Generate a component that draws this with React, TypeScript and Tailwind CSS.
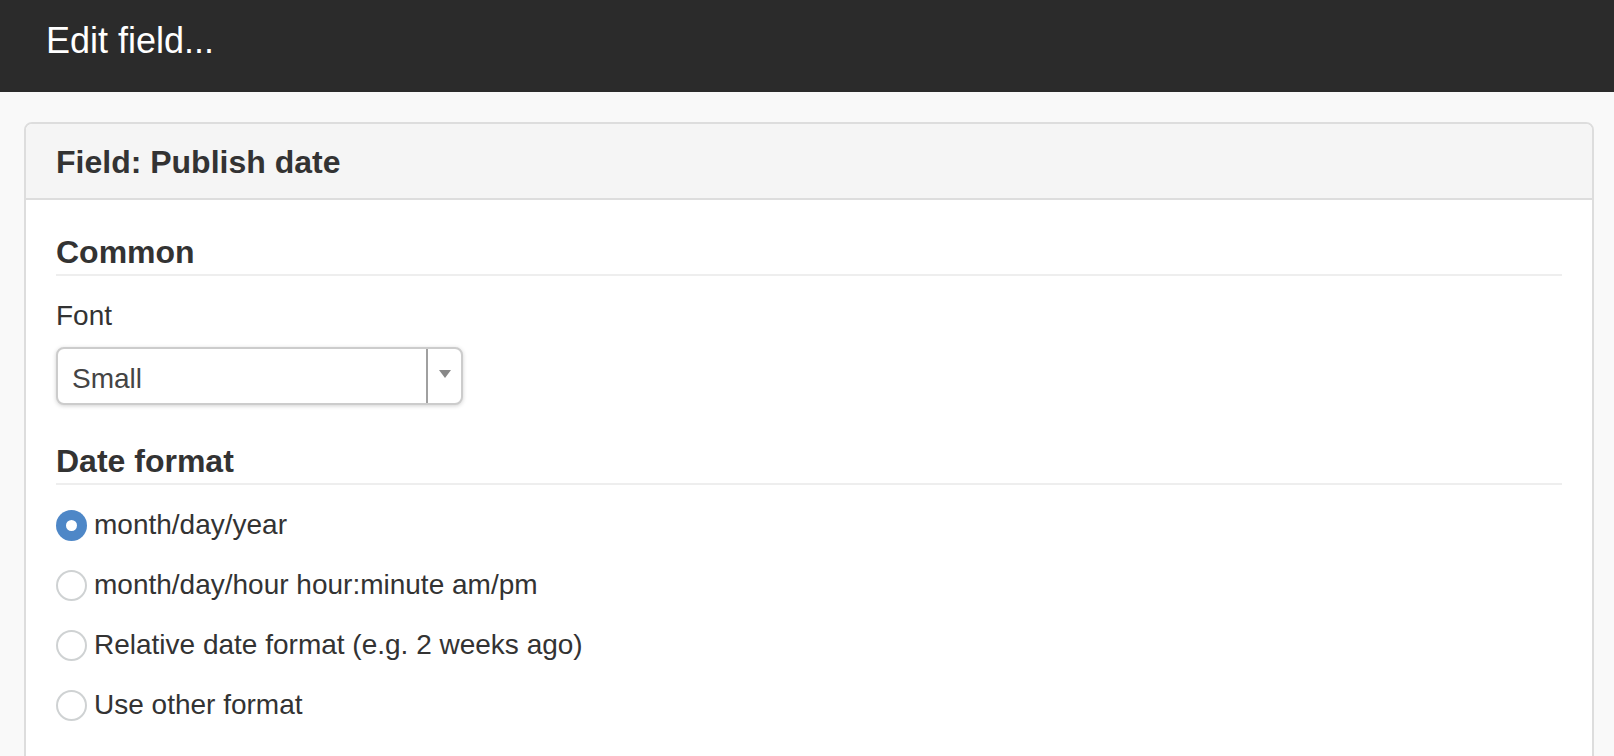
import React from "react";

const font = { fontFamily: '"Liberation Sans", Arial, Helvetica, sans-serif' };

function Radio({ checked, label }: { checked?: boolean; label: string }) {
  return (
    <label className="flex items-center h-[40px]">
      {checked ? (
        <span className="box-border w-[31px] h-[31px] rounded-full bg-[#4e87c7] flex items-center justify-center shrink-0">
          <span className="w-[11px] h-[11px] rounded-full bg-white" />
        </span>
      ) : (
        <span className="box-border w-[31px] h-[31px] rounded-full border-2 border-[#cfd2d3] bg-white shrink-0" />
      )}
      <span className="ml-[7px] text-[28px] leading-[40px] text-[#333333]">{label}</span>
    </label>
  );
}

export default function App() {
  return (
    <div className="min-h-[756px] bg-[#f9f9f9] overflow-hidden" style={font}>
      <div className="h-[92px] bg-[#2b2b2b] pl-[46px] pt-[21px] box-border">
        <div className="text-[36px] leading-[40px] text-white">Edit field...</div>
      </div>
      <div className="ml-[24px] mr-[20px] mt-[30px] border-2 border-[#dddddd] rounded-[8px] bg-white h-[700px] overflow-hidden">
        <div className="bg-[#f5f5f5] border-b-2 border-[#dddddd] pl-[30px] pt-[21px] pb-[18px]">
          <div className="text-[32px] leading-[35px] font-bold text-[#333333]">Field: Publish date</div>
        </div>
        <div className="px-[30px] pt-[35px]">
          <div className="text-[32px] leading-[35px] font-bold text-[#333333] pb-[4px] border-b-2 border-[#eeeeee]">
            Common
          </div>
          <div className="mt-[20px] text-[28px] leading-[40px] text-[#333333]">Font</div>
          <div className="mt-[11px] box-border w-[407px] h-[58px] border-2 border-[#cccccc] rounded-[8px] bg-white shadow-[0_1px_4px_rgba(0,0,0,0.18)] flex">
            <div className="flex-1 pl-[14px] pt-[10px] text-[28px] leading-[40px] text-[#444444]">Small</div>
            <div className="w-[2px] bg-[#a0a0a0]" />
            <div className="w-[33px] flex items-start justify-center pt-[21px]">
              <svg width="12" height="8" viewBox="0 0 12 8">
                <polygon points="0,0 12,0 6,8" fill="#888888" />
              </svg>
            </div>
          </div>
          <div className="mt-[39px] text-[32px] leading-[35px] font-bold text-[#333333] pb-[4px] border-b-2 border-[#eeeeee]">
            Date format
          </div>
          <div className="mt-[20px] flex flex-col gap-[20px]">
            <Radio checked label="month/day/year" />
            <Radio label="month/day/hour hour:minute am/pm" />
            <Radio label="Relative date format (e.g. 2 weeks ago)" />
            <Radio label="Use other format" />
          </div>
        </div>
      </div>
    </div>
  );
}
